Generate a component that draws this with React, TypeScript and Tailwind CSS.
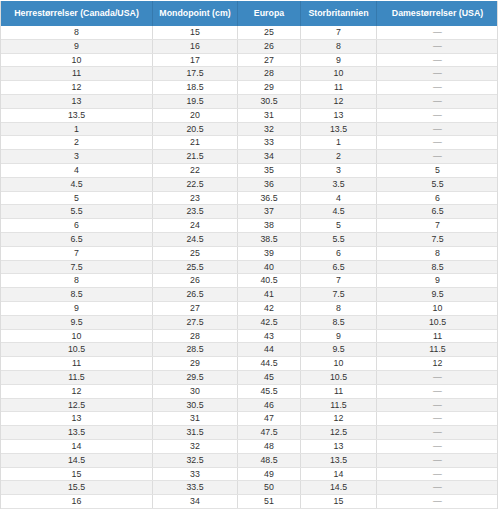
import React from "react";

const rows: [string, string, string, string, string][] = [
  ["8", "15", "25", "7", "—"],
  ["9", "16", "26", "8", "—"],
  ["10", "17", "27", "9", "—"],
  ["11", "17.5", "28", "10", "—"],
  ["12", "18.5", "29", "11", "—"],
  ["13", "19.5", "30.5", "12", "—"],
  ["13.5", "20", "31", "13", "—"],
  ["1", "20.5", "32", "13.5", "—"],
  ["2", "21", "33", "1", "—"],
  ["3", "21.5", "34", "2", "—"],
  ["4", "22", "35", "3", "5"],
  ["4.5", "22.5", "36", "3.5", "5.5"],
  ["5", "23", "36.5", "4", "6"],
  ["5.5", "23.5", "37", "4.5", "6.5"],
  ["6", "24", "38", "5", "7"],
  ["6.5", "24.5", "38.5", "5.5", "7.5"],
  ["7", "25", "39", "6", "8"],
  ["7.5", "25.5", "40", "6.5", "8.5"],
  ["8", "26", "40.5", "7", "9"],
  ["8.5", "26.5", "41", "7.5", "9.5"],
  ["9", "27", "42", "8", "10"],
  ["9.5", "27.5", "42.5", "8.5", "10.5"],
  ["10", "28", "43", "9", "11"],
  ["10.5", "28.5", "44", "9.5", "11.5"],
  ["11", "29", "44.5", "10", "12"],
  ["11.5", "29.5", "45", "10.5", "—"],
  ["12", "30", "45.5", "11", "—"],
  ["12.5", "30.5", "46", "11.5", "—"],
  ["13", "31", "47", "12", "—"],
  ["13.5", "31.5", "47.5", "12.5", "—"],
  ["14", "32", "48", "13", "—"],
  ["14.5", "32.5", "48.5", "13.5", "—"],
  ["15", "33", "49", "14", "—"],
  ["15.5", "33.5", "50", "14.5", "—"],
  ["16", "34", "51", "15", "—"],
];

const headers = [
  "Herrestørrelser (Canada/USA)",
  "Mondopoint (cm)",
  "Europa",
  "Storbritannien",
  "Damestørrelser (USA)",
];

const cols = "grid grid-cols-[152px_85px_63px_76px_121px]";

export default function App() {
  return (
    <div
      className="w-[499px] h-[512px] overflow-hidden bg-white pt-px"
      style={{ fontFamily: '"Liberation Sans", Arial, sans-serif' }}
    >
      <div className="w-[498px] border-l border-r border-[#dcdcdc]">
        <div className={`${cols} h-[25px] bg-[#3d88c1] text-white font-bold text-[8.8px]`}>
          {headers.map((h, i) => (
            <div
              key={i}
              className={`flex items-center justify-center ${i < 4 ? "border-r border-[#3579ad]" : ""}`}
            >
              {h}
            </div>
          ))}
        </div>
        {rows.map((r, ri) => (
          <div
            key={ri}
            className={`${cols} h-[13.8px] border-b border-[#e2e2e2] text-[8.8px] text-[#333] ${
              ri % 2 === 1 ? "bg-[#f2f2f2]" : "bg-white"
            }`}
          >
            {r.map((c, ci) => (
              <div
                key={ci}
                className={`flex items-center justify-center leading-none ${
                  ci < 4 ? "border-r border-[#dcdcdc]" : ""
                } ${c === "—" ? "text-[#888]" : ""}`}
              >
                {c}
              </div>
            ))}
          </div>
        ))}
      </div>
    </div>
  );
}
